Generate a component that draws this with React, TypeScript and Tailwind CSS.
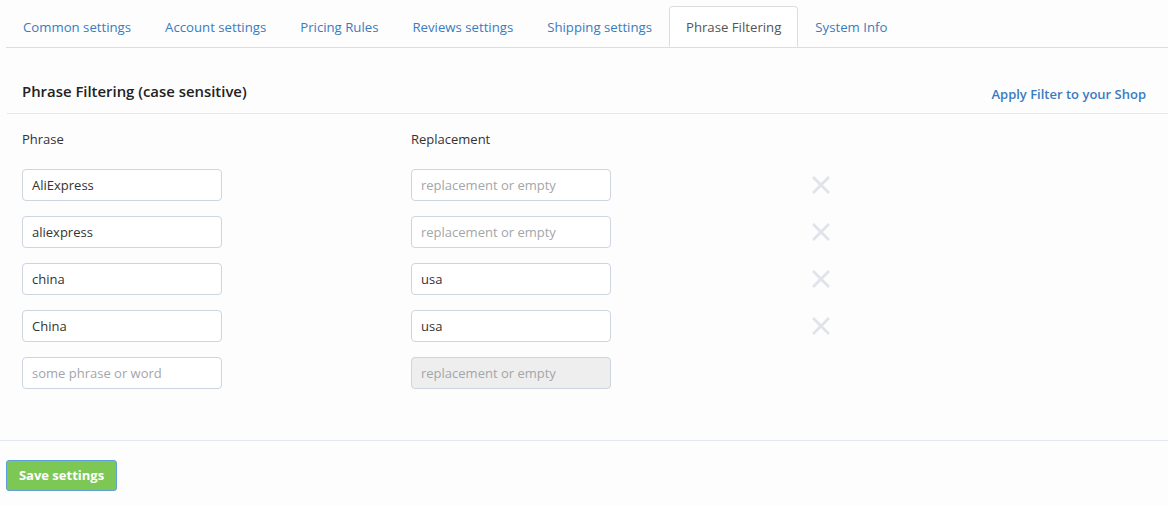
import React from 'react';

const tabs = [
  'Common settings',
  'Account settings',
  'Pricing Rules',
  'Reviews settings',
  'Shipping settings',
  'Phrase Filtering',
  'System Info',
];

const rows = [
  { phrase: 'AliExpress', replacement: '' },
  { phrase: 'aliexpress', replacement: '' },
  { phrase: 'china', replacement: 'usa' },
  { phrase: 'China', replacement: 'usa' },
];

function XIcon() {
  return (
    <svg width="18" height="18" viewBox="0 0 18 18" fill="none">
      <path d="M2 2L16 16M16 2L2 16" stroke="#dfe4ea" strokeWidth="2.8" strokeLinecap="square" />
    </svg>
  );
}

export default function App() {
  return (
    <div
      className="w-[1168px] h-[505px] bg-[#fdfdfd] text-[#333] overflow-hidden"
      style={{ fontFamily: '"Open Sans", "Liberation Sans", sans-serif' }}
    >
      {/* Tabs */}
      <div className="ml-[6px] pt-[6px] flex border-b border-[#dddddd]">
        {tabs.map((t) => {
          const active = t === 'Phrase Filtering';
          return (
            <div
              key={t}
              className={
                active
                  ? 'h-[41px] pt-[2px] px-[16px] flex items-center text-[13.2px] text-[#555] bg-white border border-[#dddddd] border-b-white rounded-t-[4px] -mb-px'
                  : 'h-[41px] pt-[2px] px-[16px] flex items-center text-[13.2px] text-[#3a7bbf] border border-transparent'
              }
            >
              {t}
            </div>
          );
        })}
      </div>

      {/* Panel header */}
      <div className="ml-[7px] mt-[32px] flex items-end justify-between pl-[15px] pr-[22px] pb-[11px] border-b border-[#e3e7ee]">
        <div className="text-[14.9px] font-semibold text-[#222]">Phrase Filtering (case sensitive)</div>
        <a className="text-[13px] font-semibold text-[#3a7bbf] mb-[-2px]" href="#">
          Apply Filter to your Shop
        </a>
      </div>

      <div className="pl-[22px] pt-[17px]">
        <div className="flex text-[13px] text-[#333] h-[17px] items-center">
          <div className="w-[389px]">Phrase</div>
          <div>Replacement</div>
        </div>

        <div className="mt-[21px] flex flex-col gap-[15px]">
          {rows.map((r, i) => (
            <div key={i} className="flex items-center">
              <input
                readOnly
                value={r.phrase}
                className="w-[200px] h-[32px] px-[9px] text-[13px] text-[#333] bg-white border border-[#ccd5e0] rounded-[4px] outline-none"
              />
              <input
                readOnly
                value={r.replacement}
                placeholder="replacement or empty"
                className="ml-[189px] w-[200px] h-[32px] px-[9px] text-[13px] text-[#333] placeholder:text-[#a3a6aa] bg-white border border-[#ccd5e0] rounded-[4px] outline-none"
              />
              <div className="ml-[201px] flex items-center">
                <XIcon />
              </div>
            </div>
          ))}
          <div className="flex items-center">
            <input
              readOnly
              placeholder="some phrase or word"
              className="w-[200px] h-[32px] px-[9px] text-[13px] placeholder:text-[#a3a6aa] bg-white border border-[#ccd5e0] rounded-[4px] outline-none"
            />
            <input
              disabled
              placeholder="replacement or empty"
              className="ml-[189px] w-[200px] h-[32px] px-[9px] text-[13px] placeholder:text-[#a3a6aa] bg-[#eeeeee] border border-[#ccd5e0] rounded-[4px] outline-none"
            />
          </div>
        </div>
      </div>

      {/* Footer */}
      <div className="mt-[51px] border-t border-[#e3e7ee] pt-[19px] pl-[6px]">
        <button className="w-[111px] h-[31px] bg-[#7dc855] border border-[#5f9fdc] rounded-[3px] text-white text-[13px] font-bold">
          Save settings
        </button>
      </div>
    </div>
  );
}
